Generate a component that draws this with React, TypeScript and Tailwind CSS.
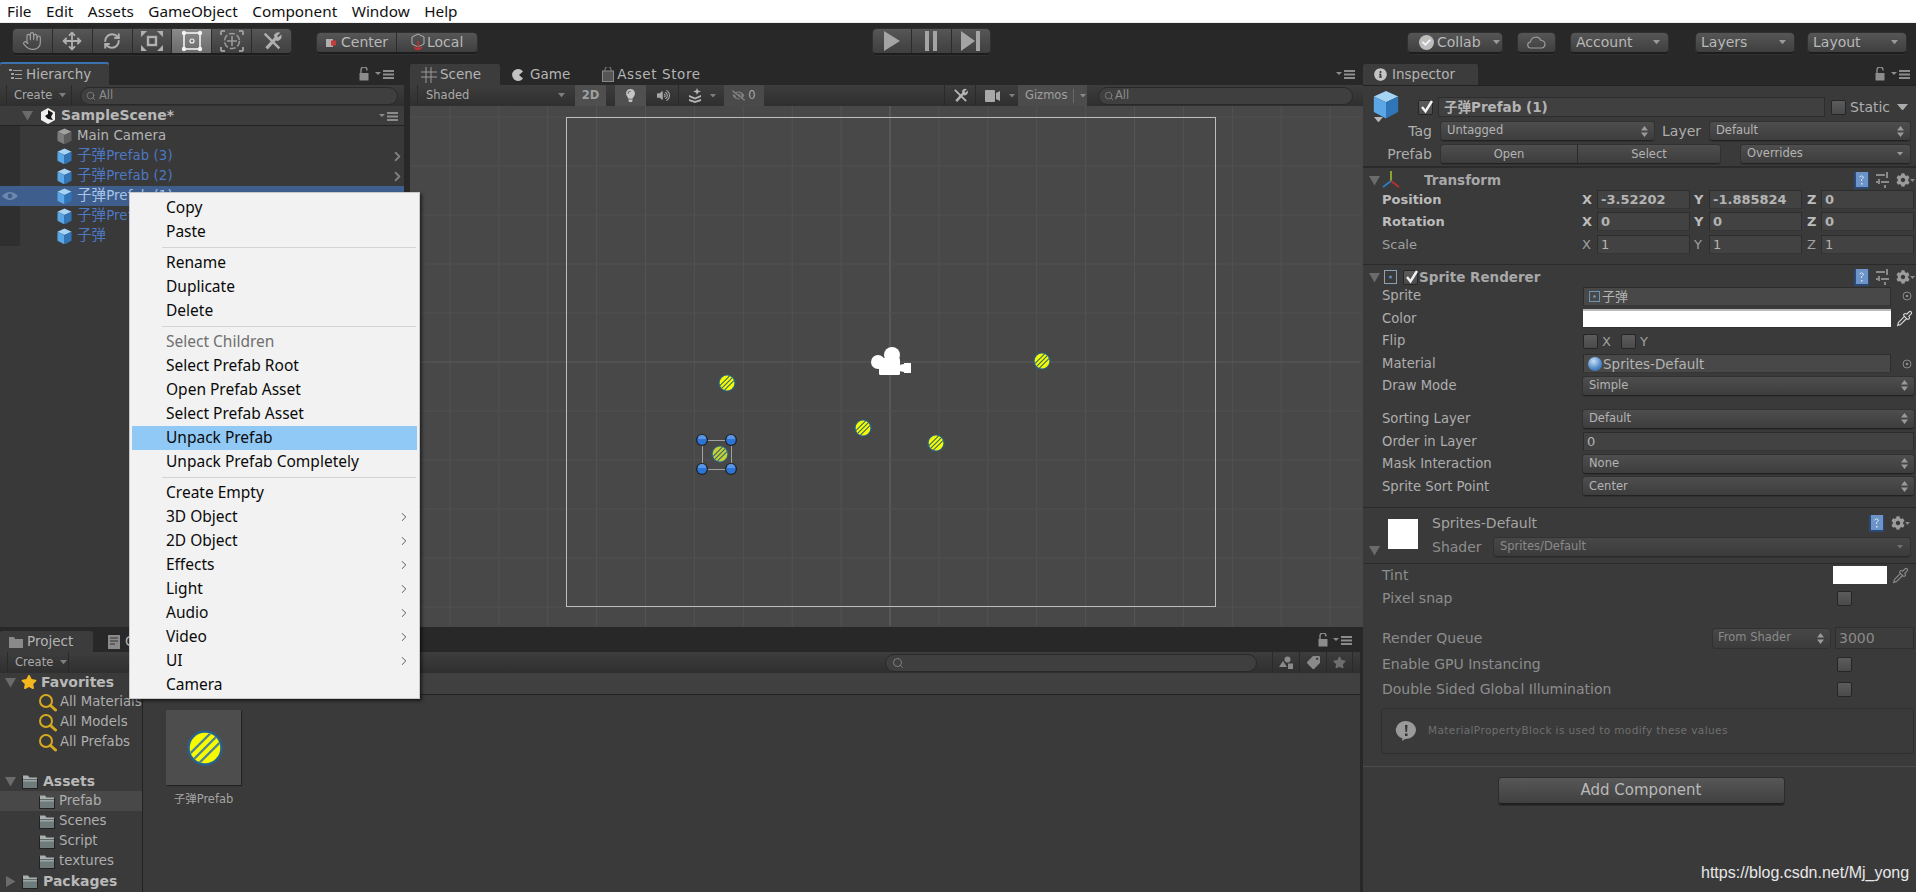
import React, { useId } from "react";
import { Hand, Move, RefreshCw, Pipette, Search, ChevronRight } from "lucide-react";
import { FaInfoCircle, FaLightbulb, FaVolumeUp, FaEyeSlash, FaCog, FaStar, FaTag, FaCheck } from "react-icons/fa";

const MenuIcon = () => (
  <svg width="22" height="12" viewBox="0 0 22 12" className="shrink-0">
    <path d="M0 4h6l-3 3z" fill="#8c8c8c" />
    <path d="M8 2h11v2H8zM8 5.5h11v2H8zM8 9h11v2H8z" fill="#8c8c8c" />
  </svg>
);
const Lock = () => (
  <svg width="10" height="14" viewBox="0 0 10 14" className="shrink-0">
    <path d="M2 6V3a3 3 0 0 1 6 0v.5" fill="none" stroke="#8c8c8c" strokeWidth="1.4" />
    <rect x="0.5" y="6" width="9" height="7.5" fill="#8c8c8c" />
  </svg>
);
const Down = ({ c = "#9a9a9a", w = 7 }: { c?: string; w?: number }) => (
  <svg width={w} height={w * 0.6} viewBox="0 0 10 6" className="shrink-0">
    <path d="M0 0h10L5 6z" fill={c} />
  </svg>
);
const Foldout = ({ open = true }: { open?: boolean }) => (
  <svg width="11" height="11" viewBox="0 0 11 11" className="shrink-0">
    {open ? <path d="M0 1h11L5.5 10.5z" fill="#6b6b6b" /> : <path d="M1 0v11L10.5 5.5z" fill="#6b6b6b" />}
  </svg>
);
const UpDown = () => (
  <svg width="7" height="11" viewBox="0 0 7 11" className="shrink-0">
    <path d="M3.5 0 7 4.5H0zM3.5 11 0 6.5h7z" fill="#9a9a9a" />
  </svg>
);
const Cube = ({ gray = false, size = 15 }: { gray?: boolean; size?: number }) => (
  <svg width={size} height={size * 1.13} viewBox="0 0 16 18" className="shrink-0">
    <path d="M8 .5 15.5 4 8 7.5.5 4z" fill={gray ? "#a0a0a0" : "#a6d4f5"} />
    <path d="M.5 4 8 7.5V17.5L.5 13.5z" fill={gray ? "#7c7c7c" : "#5aa6e6"} />
    <path d="M15.5 4 8 7.5V17.5l7.5-4z" fill={gray ? "#5c5c5c" : "#2f75b8"} />
  </svg>
);
const Folder = () => (
  <svg width="18" height="17" viewBox="0 0 18 17" className="shrink-0">
    <path d="M1 3.5h6l1.5 2H17V16H1z" fill="#222" />
    <path d="M2 2.5h5l1.5 2H16v2H2z" fill="#a8b0b0" />
    <path d="M2 7h14v8H2z" fill="#6f7b7b" />
    <path d="M2 7h14v1.5H2z" fill="#9aa4a4" />
  </svg>
);
const Lens = () => (
  <svg width="19" height="19" viewBox="0 0 19 19" className="shrink-0">
    <circle cx="8" cy="8" r="6" fill="none" stroke="#d6aa1e" strokeWidth="2" />
    <path d="M12.5 12.5 17.5 17" stroke="#d6aa1e" strokeWidth="3" strokeLinecap="round" />
  </svg>
);
const Sprite = ({ x, y, r = 8, faded = false, stripe = "#2f6a78" }: { x: number; y: number; r?: number; faded?: boolean; stripe?: string }) => {
  const id = useId();
  return (
    <g transform={`translate(${x} ${y}) scale(${r / 8})`}>
      <clipPath id={id}>
        <circle r="7.4" />
      </clipPath>
      <circle r="8.6" fill="#28628a" />
      <circle r="7.4" fill={faded ? "#c9cf30" : "#f8fa00"} />
      <g clipPath={`url(#${id})`} stroke={stripe} strokeWidth="1.1">
        <path d="M-9 4.5 4.5-9M-8 8 8-8M-4.500 9 9-4.500" />
      </g>
    </g>
  );
};
const StripeThumb = () => (
  <svg width="36" height="36" viewBox="-18 -18 36 36">
    <Sprite x={0} y={0} r={16.5} stripe="#4a8296" />
  </svg>
);
const Tools = ({ c = "#a8a8a8", s = 22 }: { c?: string; s?: number }) => (
  <svg width={s} height={s} viewBox="0 0 24 24" fill="none" stroke={c} strokeWidth="3.4">
    <path d="M6 20 17 8" />
    <path d="M4 4l16 16" strokeWidth="2.6" />
    <path d="M14 6a5 5 0 0 1 7-3l-3.5 3.5 1.5 1.5L22 5a5 5 0 0 1-5 7z" fill={c} stroke="none" />
  </svg>
);
const Seg = ({ active, children }: { active?: boolean; children: React.ReactNode }) => (
  <div
    className={`flex-1 flex items-center justify-center border-r border-[#2c2c2c] last:border-r-0 ${
      active ? "bg-linear-to-b from-[#8b8b8b] to-[#6a6a6a]" : ""
    }`}
  >
    {children}
  </div>
);
const groupCls =
  "flex rounded-[4px] bg-linear-to-b from-[#565656] to-[#3f3f3f] border-b-2 border-[#1d1d1d] shadow-[0_0_0_1px_#303030]";

const TopBtn = ({ className, children }: { className: string; children: React.ReactNode }) => (
  <div className={`${groupCls} h-[21px] items-center text-[14px] text-[#b8b8b8] ${className}`}>{children}</div>
);

const Toolbar = () => (
  <div className="h-[41px] shrink-0 bg-[#282828] border-t border-[#eeeeee] flex items-start pl-[13px] pt-[6px]">
    <div className={`${groupCls} w-[278px] h-[26px]`}>
      <Seg><Hand size={20} color="#a0a0a0" strokeWidth={1.4} /></Seg>
      <Seg><Move size={20} color="#b0b0b0" strokeWidth={2.2} /></Seg>
      <Seg><RefreshCw size={18} color="#b0b0b0" strokeWidth={2.6} /></Seg>
      <Seg>
        <svg width="24" height="22" viewBox="0 0 24 22" fill="none" stroke="#b0b0b0" strokeWidth="2">
          <rect x="8" y="7" width="8" height="8" strokeWidth="2.4" />
          <path d="M1 1h6L1 7zM23 1h-6l6 6zM1 21h6l-6-6zM23 21h-6l6-6z" fill="#b0b0b0" stroke="none" />
        </svg>
      </Seg>
      <Seg active>
        <svg width="22" height="22" viewBox="0 0 22 22" fill="none" stroke="#f2f2f2" strokeWidth="1.6">
          <rect x="3" y="3" width="16" height="16" />
          <circle cx="11" cy="11" r="2" strokeWidth="1.2" />
          <g fill="#f2f2f2" stroke="none">
            <circle cx="3" cy="3" r="2.2" /><circle cx="19" cy="3" r="2.2" /><circle cx="3" cy="19" r="2.2" /><circle cx="19" cy="19" r="2.2" />
          </g>
        </svg>
      </Seg>
      <Seg>
        <svg width="24" height="22" viewBox="0 0 24 22" fill="none" stroke="#9a9a9a" strokeWidth="1.6">
          <circle cx="12" cy="11" r="7.5" strokeDasharray="6 2" />
          <path d="M12 6v10M7 11h10" />
          <path d="M1 1h4M1 1v4M23 1h-4M23 1v4M1 21h4M1 21v-4M23 21h-4M23 21v-4" strokeWidth="2" />
        </svg>
      </Seg>
      <Seg><Tools c="#b0b0b0" /></Seg>
    </div>
    <div className={`${groupCls} ml-[26px] mt-[4px] w-[160px] h-[21px] text-[14px] text-[#b8b8b8]`}>
      <div className="w-[80px] flex items-center pl-[9px] gap-[3px] border-r border-[#2c2c2c]">
        <svg width="12" height="10" viewBox="0 0 12 10"><rect width="7" height="8" y="1" fill="#b0b0b0" /><rect x="5" y="2.5" width="5" height="5" fill="#c73a3a" /></svg>
        Center
      </div>
      <div className="flex-1 flex items-center pl-[14px] gap-[2px]">
        <svg width="14" height="19" viewBox="0 0 14 19" fill="none"><path d="M7 1l6 3v7l-6 3-6-3V4z" stroke="#b0b0b0" /><path d="M7 8v9M3 14q4 5 8 0" stroke="#c43030" strokeWidth="1.6" /></svg>
        Local
      </div>
    </div>
    <div className={`${groupCls} ml-[396px] w-[117px] h-[26px]`}>
      <Seg><svg width="18" height="20" viewBox="0 0 18 20"><path d="M1 0 17 10 1 20z" fill="#a4a4a4" /></svg></Seg>
      <Seg><svg width="12" height="20" viewBox="0 0 12 20"><path d="M0 0h4v20H0zM8 0h4v20H8z" fill="#a4a4a4" /></svg></Seg>
      <Seg><svg width="20" height="20" viewBox="0 0 20 20"><path d="M0 0 14 10 0 20zM15 0h4v20h-4z" fill="#a4a4a4" /></svg></Seg>
    </div>
    <TopBtn className="ml-[418px] mt-[4px] w-[94px] pl-[11px] gap-[3px]">
      <span className="w-[15px] h-[15px] rounded-full bg-[#bcbcbc] flex items-center justify-center"><FaCheck size={9} color="#f4f4f4" /></span>
      Collab
      <span className="ml-[9px]"><Down /></span>
    </TopBtn>
    <TopBtn className="ml-[16px] mt-[4px] w-[37px] justify-center">
      <svg width="19" height="13" viewBox="0 0 19 13" fill="none" stroke="#9c9c9c" strokeWidth="1.2"><path d="M4 12a3 3 0 0 1-.5-6A5.5 5.5 0 0 1 14 4.5 3.8 3.8 0 0 1 15 12z" /></svg>
    </TopBtn>
    <TopBtn className="ml-[16px] mt-[4px] w-[97px] pl-[5px] justify-between pr-[8px]">Account<Down /></TopBtn>
    <TopBtn className="ml-[28px] mt-[4px] w-[98px] pl-[5px] justify-between pr-[8px]">Layers<Down /></TopBtn>
    <TopBtn className="ml-[14px] mt-[4px] w-[98px] pl-[5px] justify-between pr-[8px]">Layout<Down /></TopBtn>
  </div>
);

const Tab = ({ className = "", active, blue, children }: { className?: string; active?: boolean; blue?: boolean; children: React.ReactNode }) => (
  <div
    className={`h-[21px] flex items-center text-[13.5px] text-[#b4b4b4] rounded-t-[2px] ${active ? "bg-[#3c3c3c]" : ""} ${
      blue ? "shadow-[0_-2px_0_0_#3a72b0]" : ""
    } ${className}`}
  >
    {children}
  </div>
);
const barCls = "h-[21px] shrink-0 bg-linear-to-b from-[#3d3d3d] to-[#2f2f2f] flex items-center";

const Row = ({ name, blue, sel, gray, chev }: { name: string; blue?: boolean; sel?: boolean; gray?: boolean; chev?: boolean }) => (
  <div className={`h-[20px] flex items-center ${sel ? "bg-[#3e5f8e]" : ""}`}>
    <div className={`w-[20px] h-full flex items-center justify-center ${sel ? "" : "bg-[#2f2f2f]"}`}>
      {sel && (
        <svg width="16" height="10" viewBox="0 0 16 10">
          <path d="M0 5q8-8 16 0-8 8-16 0z" fill="#6d88ad" />
          <circle cx="8" cy="5" r="2.4" fill="#3e5f8e" />
        </svg>
      )}
    </div>
    <div className="ml-[37px]"><Cube gray={gray} /></div>
    <span className={`ml-[5px] text-[13.3px] tracking-[0.1px] ${blue ? (sel ? "text-[#a9c4ea]" : "text-[#4d78c4]") : "text-[#b4b4b4]"}`}>
      {blue ? <><span className="text-[14.5px]">子弹</span>{name}</> : name}
    </span>
    {chev && <ChevronRight size={15} strokeWidth={3} color="#7f7f7f" className="ml-auto mr-[-1px]" />}
  </div>
);

const Hierarchy = () => (
  <div className="w-[404px] shrink-0 flex flex-col bg-[#393939]">
    <div className="h-[22px] shrink-0 bg-[#282828] flex items-end pr-[7px]">
      <Tab active blue className="w-[109px] pl-[9px] gap-[4px]">
        <svg width="13" height="11" viewBox="0 0 13 11"><path d="M0 0h3v2H0zM4 1h9v1H4zM2 4h3v2H2zM6 5h7v1H6zM2 8h3v2H2zM6 9h7v1H6z" fill="#a0a0a0" /></svg>
        Hierarchy
      </Tab>
      <div className="ml-auto self-center flex items-center gap-[6px]"><Lock /><MenuIcon /></div>
    </div>
    <div className={barCls}>
      <div className="w-[66px] ml-[6px] h-full border-x border-[#2a2a2a] flex items-center pl-[7px] gap-[7px] text-[11.5px] text-[#aaaaaa]">Create<Down c="#7e7e7e" /></div>
      <div className="ml-[8px] w-[318px] h-[18px] rounded-full bg-[#3f3f3f] border border-[#292929] flex items-center pl-[5px] gap-[3px] text-[11.5px] text-[#8b8b8b]">
        <Search size={10} color="#808080" />All
      </div>
    </div>
    <div className="h-[20px] shrink-0 bg-[#3c3c3c] border-b border-[#222] flex items-center pl-[22px] pr-[3px]">
      <Foldout />
      <svg width="18" height="18" viewBox="0 0 18 18" className="ml-[6px]">
        <path d="M9 1l7 4v8l-7 4-7-4V5z" fill="#f0f0f0" />
        <path d="M9 3l5 3-2 4 2 3-5-1-3-3 3-2z" fill="#151515" />
      </svg>
      <span className="ml-[4px] text-[14px] font-bold text-[#b8b8b8]">SampleScene*</span>
      <div className="ml-auto"><MenuIcon /></div>
    </div>
    <div className="flex-1">
      <Row name="Main Camera" gray />
      <Row name="Prefab (3)" blue chev />
      <Row name="Prefab (2)" blue chev />
      <Row name="Prefab (1)" blue sel chev />
      <Row name="Prefab" blue chev />
      <Row name="" blue />
    </div>
  </div>
);

const gridX = Array.from({ length: 20 }, (_, i) => 480 + (i - 9) * 48.9);
const gridY = Array.from({ length: 11 }, (_, i) => 11 + i * 49);

const SceneCanvas = () => (
  <div className="flex-1 bg-[#484848] overflow-hidden">
    <svg width="951" height="520" viewBox="0 0 951 520" className="block">
      {gridX.map((x) => (
        <line key={x} x1={x} x2={x} y1={0} y2={520} stroke={x === 480 ? "#666666" : "#535353"} />
      ))}
      {gridY.map((y) => (
        <line key={y} x1={0} x2={951} y1={y} y2={y} stroke={y === 256 ? "#5a5a5a" : "#505050"} />
      ))}
      <rect x="156.5" y="11.5" width="649" height="489" fill="none" stroke="#bdbdbd" />
      <g fill="#fff">
        <circle cx="468" cy="256" r="7" />
        <circle cx="482" cy="249" r="8" />
        <rect x="469" y="252" width="21" height="17" rx="1.5" />
        <path d="M489 259l5-1v-1h7v10h-7v-1l-5-1z" />
      </g>
      <Sprite x={317} y={277} />
      <Sprite x={453} y={322} />
      <Sprite x={526} y={337} />
      <Sprite x={632} y={255} />
      <Sprite x={310} y={348} faded />
      <rect x="292.5" y="334.5" width="29" height="29" fill="none" stroke="#a0a0a0" />
      {[[292, 334], [321, 334], [292, 363], [321, 363]].map(([x, y]) => (
        <g key={`${x}-${y}`}>
          <circle cx={x} cy={y} r="6" fill="#222" />
          <circle cx={x} cy={y} r="4.8" fill="#2d74d8" />
          <path d={`M${x - 4} ${y - 1}a4 4 0 0 1 8 0z`} fill="#5a96e4" />
        </g>
      ))}
    </svg>
  </div>
);

const Scene = () => (
  <div className="flex-1 flex flex-col ml-[6px] min-w-0">
    <div className="h-[22px] shrink-0 bg-[#282828] flex items-end pr-[5px]">
      <Tab active className="w-[90px] pl-[11px] gap-[3px]">
        <svg width="16" height="16" viewBox="0 0 16 16" stroke="#9a9a9a"><path d="M0 5h16M0 10h16M5 0v16M10 0v16" /></svg>
        Scene
      </Tab>
      <Tab className="ml-[12px] gap-[6px]">
        <svg width="12" height="12" viewBox="0 0 12 12"><path d="M11 2.5A6 6 0 1 0 11 9.5L7 6z" fill="#c2c2c2" /></svg>
        Game
      </Tab>
      <Tab className="ml-[32px] gap-[3px] tracking-[0.6px]">
        <svg width="12" height="15" viewBox="0 0 12 15" fill="none" stroke="#8a8a8a"><path d="M3 4V2.5a3 3 0 0 1 6 0V4" /><rect x=".5" y="4" width="11" height="10.5" fill="#555" /></svg>
        Asset Store
      </Tab>
      <div className="ml-auto self-center"><MenuIcon /></div>
    </div>
    <div className={`${barCls} text-[11.5px] text-[#aaaaaa]`}>
      <div className="ml-[7px] w-[153px] h-full flex items-center pl-[8px] pr-[5px] justify-between border-l border-[#2a2a2a]">Shaded<Down c="#7e7e7e" /></div>
      <div className="ml-[5px] w-[31px] h-full bg-[#4f4f4f] flex items-center justify-center font-bold text-[#a0a0a0]">2D</div>
      <div className="ml-[9px] w-[31px] h-full bg-[#505050] flex items-center justify-center"><FaLightbulb size={13} color="#c4c4c4" /></div>
      <div className="ml-[2px] w-[31px] h-full flex items-center justify-center border-r border-[#2a2a2a]"><FaVolumeUp size={13} color="#a8a8a8" /></div>
      <div className="w-[45px] h-full flex items-center pl-[9px] gap-[7px]">
        <svg width="15" height="15" viewBox="0 0 15 15"><path d="M9 0l1 2.5 3 1-3 1-1 2.500-1-2.500-3-1 3-1zM1 7l6 2.500L13 7v2l-6 2.500L1 9zM1 11l6 2 6-2v2l-6 2-6-2z" fill="#b4b4b4" /></svg>
        <Down c="#7e7e7e" w={6} />
      </div>
      <div className="w-[40px] h-full bg-[#4a4a4a] flex items-center justify-center gap-[3px] text-[#a8a8a8]"><FaEyeSlash size={13} color="#7f7f7f" />0</div>
      <div className="ml-[180px] w-[32px] h-full flex items-center justify-center border-x border-[#2a2a2a]"><Tools s={17} c="#b4b4b4" /></div>
      <div className="w-[42px] h-full flex items-center pl-[9px] gap-[8px]">
        <svg width="16" height="12" viewBox="0 0 16 12"><rect width="10" height="12" rx="1" fill="#a8a8a8" /><path d="M11 3l4-2v10l-4-2z" fill="#a8a8a8" /></svg>
        <Down c="#7e7e7e" w={6} />
      </div>
      <div className="w-[69px] h-full bg-[#4c4c4c] flex items-center pl-[7px] gap-[6px] text-[#a0a0a0] whitespace-nowrap">Gizmos<span className="w-px h-[14px] bg-[#6a6a6a]" /><Down c="#8a8a8a" w={6} /></div>
      <div className="ml-[11px] w-[255px] h-[18px] rounded-full bg-[#3f3f3f] border border-[#292929] flex items-center pl-[5px] gap-[1px] text-[#8b8b8b]">
        <Search size={10} color="#808080" />All
      </div>
    </div>
    <SceneCanvas />
  </div>
);

const Tree = ({ icon, name, pl, sel }: { icon: React.ReactNode; name: string; pl: number; sel?: boolean }) => (
  <div className={`h-[20px] flex items-center ${sel ? "bg-[#484848]" : ""}`} style={{ paddingLeft: pl }}>
    {icon}
    <span className="ml-[3px] whitespace-nowrap text-[13.3px] text-[#aeaeae]">{name}</span>
  </div>
);

const Project = () => (
  <div className="h-[265px] shrink-0 flex flex-col mr-[3px]">
    <div className="h-[25px] shrink-0 bg-[#282828] flex items-end pr-[5px]">
      <Tab active className="w-[93px] pl-[9px] gap-[4px]">
        <svg width="14" height="12" viewBox="0 0 14 12"><path d="M0 1h5l1 2h8v9H0z" fill="#8a8a8a" /></svg>
        Project
      </Tab>
      <Tab className="ml-[15px] gap-[5px]">
        <svg width="12" height="14" viewBox="0 0 12 14"><rect width="12" height="14" fill="#8a8a8a" /><path d="M2 3h8M2 6h8M2 9h5" stroke="#333" /></svg>
        Console
      </Tab>
      <div className="ml-auto self-center flex items-center gap-[5px]"><Lock /><MenuIcon /></div>
    </div>
    <div className={barCls}>
      <div className="ml-[7px] w-[62px] h-full border-x border-[#2a2a2a] flex items-center pl-[7px] gap-[7px] text-[11.5px] text-[#aaaaaa]">Create<Down c="#7e7e7e" /></div>
      <div className="ml-[816px] w-[372px] h-[18px] rounded-full bg-[#3f3f3f] border border-[#292929] flex items-center pl-[6px]"><Search size={12} color="#808080" /></div>
      <div className="ml-[15px] w-[27px] h-full border-l border-[#2a2a2a] flex items-center justify-center">
        <svg width="14" height="13" viewBox="0 0 14 13" fill="#8a8a8a"><circle cx="8.500" cy="3.500" r="3" /><path d="M4 5l4 6H0z" /><rect x="9" y="7.500" width="5" height="5.500" /></svg>
      </div>
      <div className="w-[27px] h-full border-l border-[#2a2a2a] flex items-center justify-center"><FaTag size={13} color="#8a8a8a" className="rotate-90" /></div>
      <div className="w-[27px] h-full border-x border-[#2a2a2a] flex items-center justify-center"><FaStar size={13} color="#6e6e6e" /></div>
    </div>
    <div className="flex-1 flex bg-[#3a3a3a] min-h-0">
      <div className="w-[143px] shrink-0 border-r border-[#222] overflow-hidden">
        <div className="h-[20px] flex items-center pl-[5px] mt-[-1px]">
          <Foldout /><FaStar size={16} color="#f5b81e" className="ml-[5px]" />
          <span className="ml-[4px] font-bold text-[14px] text-[#b8b8b8]">Favorites</span>
        </div>
        <Tree pl={38} icon={<Lens />} name="All Materials" />
        <Tree pl={38} icon={<Lens />} name="All Models" />
        <Tree pl={38} icon={<Lens />} name="All Prefabs" />
        <div className="h-[19px]" />
        <div className="h-[20px] flex items-center pl-[5px]">
          <Foldout /><span className="ml-[5px]"><Folder /></span>
          <span className="ml-[4px] font-bold text-[14px] text-[#b8b8b8]">Assets</span>
        </div>
        <Tree pl={38} sel icon={<Folder />} name="Prefab" />
        <Tree pl={38} icon={<Folder />} name="Scenes" />
        <Tree pl={38} icon={<Folder />} name="Script" />
        <Tree pl={38} icon={<Folder />} name="textures" />
        <div className="h-[20px] flex items-center pl-[5px]">
          <Foldout open={false} /><span className="ml-[5px]"><Folder /></span>
          <span className="ml-[4px] font-bold text-[14px] text-[#b8b8b8]">Packages</span>
        </div>
      </div>
      <div className="flex-1 flex flex-col min-w-0">
        <div className="h-[22px] shrink-0 bg-[#404040] border-b border-[#222]" />
        <div className="ml-[23px] mt-[15px] w-[75px] flex flex-col items-center">
          <div className="w-[75px] h-[75px] bg-[#4d4d4d] shadow-[1px_1px_1px_#222] flex items-center justify-center pl-[3px]"><StripeThumb /></div>
          <span className="mt-[6px] text-[11.5px] text-[#a4a4a4] whitespace-nowrap">子弹Prefab</span>
        </div>
      </div>
    </div>
  </div>
);

const Item = ({ t, dim, hi, sub }: { t: string; dim?: boolean; hi?: boolean; sub?: boolean }) => (
  <div className={`h-[24px] flex items-center pl-[34px] pr-[8px] ${hi ? "bg-[#90c8f6]" : ""} ${dim ? "text-[#6f6f6f]" : "text-[#0a0a0a]"}`}>
    {t}
    {sub && <ChevronRight size={14} strokeWidth={1.5} color="#444" className="ml-auto mr-[-2px]" />}
  </div>
);
const Sep = () => <div className="h-[7px] flex items-center pl-[30px] pr-[1px]"><div className="w-full h-px bg-[#d4d4d4]" /></div>;

const ContextMenu = () => (
  <div className="absolute left-[129px] top-[192px] w-[291px] pt-[3px] pb-px pl-[2px] pr-[2px] bg-[#f2f2f2] border border-[#c8c8c8] shadow-[2px_2px_3px_rgba(0,0,0,0.55)] text-[15.5px] font-[family-name:'Noto_Sans',sans-serif]">
    <Item t="Copy" /><Item t="Paste" /><Sep />
    <Item t="Rename" /><Item t="Duplicate" /><Item t="Delete" /><Sep />
    <Item t="Select Children" dim /><Item t="Select Prefab Root" /><Item t="Open Prefab Asset" /><Item t="Select Prefab Asset" />
    <Item t="Unpack Prefab" hi /><Item t="Unpack Prefab Completely" /><Sep />
    <Item t="Create Empty" /><Item t="3D Object" sub /><Item t="2D Object" sub /><Item t="Effects" sub /><Item t="Light" sub />
    <Item t="Audio" sub /><Item t="Video" sub /><Item t="UI" sub /><Item t="Camera" />
  </div>
);

const inspectorLabel = "text-[13.2px] text-[#aeaeae] whitespace-nowrap";
const dimLabel = "text-[14px] text-[#8d8d8d] whitespace-nowrap";
const Drop = ({ t, className = "" }: { t: string; className?: string }) => (
  <div className={`h-[19px] rounded-[3px] bg-linear-to-b from-[#4e4e4e] to-[#3d3d3d] border-b border-[#222] shadow-[0_0_0_1px_#313131] flex items-center pl-[6px] pr-[6px] justify-between text-[11.5px] text-[#b4b4b4] whitespace-nowrap ${className}`}>
    {t}<UpDown />
  </div>
);
const Field = ({ t, className = "", bold }: { t: React.ReactNode; className?: string; bold?: boolean }) => (
  <div className={`h-[19px] bg-[#424242] border border-[#2d2d2d] border-b-[#363636] flex items-center pl-[3px] text-[13px] text-[#b4b4b4] whitespace-nowrap ${bold ? "font-bold" : ""} ${className}`}>{t}</div>
);
const Check = ({ on, className = "" }: { on?: boolean; className?: string }) => (
  <div className={`relative w-[15px] h-[15px] shrink-0 rounded-[2px] bg-linear-to-b from-[#5c5c5c] to-[#4a4a4a] border border-[#262626] ${className}`}>
    {on && (
      <svg width="14" height="15" viewBox="0 0 14 15" className="absolute left-[1px] top-[-2px]">
        <path d="M2 8l3.500 4.500L12 2" fill="none" stroke="#f2f2f2" strokeWidth="2.4" />
      </svg>
    )}
  </div>
);
const Book = () => (
  <svg width="16" height="18" viewBox="0 0 16 18" className="shrink-0">
    <rect x="1" y="1" width="15" height="17" fill="#2a4a75" />
    <rect x="3" y="1" width="12" height="15" fill="#6d94c8" />
    <path d="M6.500 6q2-2.500 4 0-.5 1.500-2 2.500v1.500" stroke="#d7e4f5" fill="none" />
    <rect x="8" y="12" width="1.500" height="1.500" fill="#d7e4f5" />
  </svg>
);
const Sliders = () => (
  <svg width="13" height="16" viewBox="0 0 13 16" fill="#8a8a8a" className="shrink-0">
    <path d="M0 2h9v2H0zM10 0h2v6h-2zM0 9h2v-2h2v5H2v-1H0zM5 9h8v2H5zM8 13h2v3H8z" />
  </svg>
);
const Gear = () => (
  <span className="flex items-center shrink-0"><FaCog size={14} color="#9c9c9c" /><Down c="#8a8a8a" w={5} /></span>
);
const Dot = () => (
  <svg width="10" height="10" viewBox="0 0 10 10" fill="none" stroke="#8a8a8a" className="shrink-0">
    <circle cx="5" cy="5" r="4" /><circle cx="5" cy="5" r="1.300" fill="#8a8a8a" stroke="none" />
  </svg>
);
const PropRow = ({ label, children }: { label: string; children?: React.ReactNode }) => (
  <div className="h-[22.5px] flex items-center pl-[19px] pr-[2px]">
    <span className={`w-[201px] shrink-0 ${inspectorLabel}`}>{label}</span>
    {children}
  </div>
);
const Vec = ({ label, bold, x, y, z }: { label: string; bold?: boolean; x: string; y: string; z: string }) => (
  <div className={`h-[22.5px] flex items-center pl-[19px] pr-[2px] text-[13px] ${bold ? "font-bold text-[#bcbcbc]" : "text-[#a0a0a0]"}`}>
    <span className="w-[200px] shrink-0">{label}</span>
    <span className="w-[15px] shrink-0">X</span><Field t={x} bold={bold} className="w-[93px]" />
    <span className="w-[19px] shrink-0 pl-[4px]">Y</span><Field t={y} bold={bold} className="w-[93px]" />
    <span className="w-[19px] shrink-0 pl-[5px]">Z</span><Field t={z} bold={bold} className="flex-1" />
  </div>
);
const Head = ({ icon, t, pl, check }: { icon: React.ReactNode; t: string; pl: number; check?: boolean }) => (
  <div className="h-[20px] pt-[4px] flex items-center pl-[6px] pr-px">
    <Foldout />
    <span className="ml-[2px] w-[18px] flex justify-center">{icon}</span>
    {check && <Check on className="ml-[3px]" />}
    <span className="font-bold text-[13.5px] text-[#a8a8a8] whitespace-nowrap" style={{ marginLeft: pl }}>{t}</span>
    <div className="ml-auto flex items-center gap-[7px]"><Book /><Sliders /><Gear /></div>
  </div>
);

const Inspector = () => (
  <div className="flex-1 flex flex-col min-w-0">
    <div className="h-[22px] shrink-0 bg-[#282828] flex items-end pr-[3px]">
      <Tab active className="w-[115px] pl-[11px] gap-[5px]"><FaInfoCircle size={13} color="#c4c4c4" />Inspector</Tab>
      <div className="ml-auto self-center flex items-center gap-[6px]"><Lock /><MenuIcon /></div>
    </div>
    <div className="flex-1 bg-[#3a3a3a] border-t border-[#222] overflow-hidden pt-px">
      <div className="h-[81px] border-b-2 border-[#2a2a2a] pr-[6px]">
        <div className="flex items-center pt-[10px] h-[30px]">
          <div className="ml-[14px] w-[28px]" />
          <Check on className="ml-[13px]" />
          <div className="ml-[5px] w-[387px] h-[20px] bg-[#404040] border border-[#2d2d2d] flex items-center pl-[5px] text-[13.5px] font-bold text-[#b4b4b4]">子弹Prefab (1)</div>
          <Check className="ml-[6px]" />
          <span className="ml-[4px] text-[14px] text-[#aeaeae]">Static</span>
          <span className="ml-[7px]"><Down c="#aaaaaa" w={11} /></span>
        </div>
        <div className="relative flex items-center h-[19px] mt-[5px]">
          <div className="absolute left-[10px] top-[-32px]">
            <Cube size={26} />
            <div className="absolute left-[1px] bottom-[-3px]"><Down c="#b8b8b8" w={9} /></div>
          </div>
          <span className="w-[69px] text-right text-[14px] text-[#aeaeae]">Tag</span>
          <Drop t="Untagged" className="ml-[9px] w-[213px]" />
          <span className="ml-[8px] w-[48px] text-[14px] text-[#aeaeae]">Layer</span>
          <Drop t="Default" className="w-[200px]" />
        </div>
        <div className="flex items-center h-[19px] mt-[4px]">
          <span className="w-[69px] text-right text-[14px] text-[#aeaeae]">Prefab</span>
          <div className="ml-[9px] w-[279px] h-[19px] rounded-[3px] bg-linear-to-b from-[#4e4e4e] to-[#3d3d3d] border-b border-[#222] shadow-[0_0_0_1px_#313131] flex text-[11.5px] text-[#b4b4b4]">
            <span className="w-[137px] flex items-center justify-center border-r border-[#2a2a2a] pt-[2px]">Open</span>
            <span className="flex-1 flex items-center justify-center pt-[2px]">Select</span>
          </div>
          <div className="ml-[21px] w-[169px] h-[19px] rounded-[3px] bg-linear-to-b from-[#4e4e4e] to-[#3d3d3d] border-b border-[#222] shadow-[0_0_0_1px_#313131] flex items-center justify-between pl-[6px] pr-[7px] text-[11.5px] text-[#b4b4b4]">Overrides<Down w={6} /></div>
        </div>
      </div>
      <div className="h-[97px] border-b border-[#2a2a2a]">
        <Head
          t="Transform"
          pl={24}
          icon={
            <svg width="18" height="18" viewBox="0 0 18 18" fill="none" strokeWidth="1.600">
              <path d="M9 10V0" stroke="#9ac02e" /><path d="M9 10 1 16" stroke="#2d7fd0" /><path d="M9 10l8 6" stroke="#c03030" />
            </svg>
          }
        />
        <Vec label="Position" bold x="-3.52202" y="-1.885824" z="0" />
        <Vec label="Rotation" bold x="0" y="0" z="0" />
        <Vec label="Scale" x="1" y="1" z="1" />
      </div>
      <div className="h-[243px] border-b border-[#2a2a2a]">
        <Head
          t="Sprite Renderer"
          pl={1}
          check
          icon={
            <svg width="16" height="17" viewBox="0 0 16 17" fill="none" stroke="#8fa0b0">
              <rect x="1.500" y="1.500" width="12" height="13" /><circle cx="7.500" cy="8" r="1.500" fill="#5c8ebc" stroke="none" />
            </svg>
          }
        />
        <PropRow label="Sprite">
          <Field className="w-[308px] bg-[#484848]" t={
            <span className="flex items-center gap-[1px] pl-px text-[13px]">
              <svg width="13" height="13" viewBox="0 0 13 13" fill="none" stroke="#6c93b4"><rect x="1.500" y="1.500" width="10" height="10" /><circle cx="6.500" cy="6.500" r="1" fill="#6c93b4" /></svg>子弹
            </span>
          } />
          <span className="ml-[11px]"><Dot /></span>
        </PropRow>
        <PropRow label="Color">
          <div className="w-[308px] h-[19px] bg-white border-t-[2px] border-[#bbbbbb] border-b border-b-[#333]" />
          <Pipette size={17} color="#d8d8d8" strokeWidth={1.6} className="ml-[5px]" />
        </PropRow>
        <PropRow label="Flip">
          <Check /><span className="ml-[4px] text-[13px] text-[#a0a0a0]">X</span>
          <Check className="ml-[10px]" /><span className="ml-[4px] text-[13px] text-[#a0a0a0]">Y</span>
        </PropRow>
        <PropRow label="Material">
          <Field className="w-[308px] bg-[#484848]" t={
            <span className="flex items-center gap-px pl-px text-[13.5px]">
              <span className="w-[14px] h-[14px] rounded-full bg-[radial-gradient(circle_at_40%_30%,#c8e0f8,#4d87c6_60%,#2b5c96)]" />Sprites-Default
            </span>
          } />
          <span className="ml-[11px]"><Dot /></span>
        </PropRow>
        <PropRow label="Draw Mode"><Drop t="Simple" className="flex-1" /></PropRow>
        <div className="h-[10.5px]" />
        <PropRow label="Sorting Layer"><Drop t="Default" className="flex-1" /></PropRow>
        <PropRow label="Order in Layer"><Field t="0" className="flex-1" /></PropRow>
        <PropRow label="Mask Interaction"><Drop t="None" className="flex-1" /></PropRow>
        <PropRow label="Sprite Sort Point"><Drop t="Center" className="flex-1" /></PropRow>
      </div>
      <div className="h-[56px] border-b border-[#2a2a2a] flex pl-[6px] pr-[6px]">
        <div className="self-end mb-[7px]"><Foldout /></div>
        <div className="ml-[8px] mt-[11px] w-[30px] h-[30px] bg-white shrink-0" />
        <div className="ml-[14px] flex-1 min-w-0">
          <div className="mt-[7px] h-[16px] flex items-center text-[14px] text-[#a4a4a4]">
            Sprites-Default
            <div className="ml-auto flex items-center gap-[7px]"><Book /><Gear /></div>
          </div>
          <div className="mt-[6px] flex items-center">
            <span className="w-[62px] text-[14px] text-[#8d8d8d]">Shader</span>
            <div className="flex-1 h-[19px] rounded-[3px] bg-linear-to-b from-[#474747] to-[#3b3b3b] border-b border-[#2a2a2a] shadow-[0_0_0_1px_#313131] flex items-center justify-between pl-[6px] pr-[7px] text-[11.5px] text-[#8a8a8a]">Sprites/Default<Down c="#707070" w={6} /></div>
          </div>
        </div>
      </div>
      <div className="flex items-center h-[22px] pl-[19px]">
        <span className={dimLabel}>Tint</span>
        <div className="ml-auto w-[54px] h-[18px] bg-white" />
        <Pipette size={17} color="#8c8c8c" strokeWidth={1.600} className="ml-[5px] mr-[7px]" />
      </div>
      <div className="flex items-center h-[22px] mt-px pl-[19px]">
        <span className={dimLabel}>Pixel snap</span>
        <Check className="ml-auto mr-[64px]" />
      </div>
      <div className="flex items-center h-[22px] mt-[18px] pl-[19px] pr-[2px]">
        <span className={dimLabel}>Render Queue</span>
        <div className="ml-auto w-[117px] h-[19px] rounded-[3px] bg-linear-to-b from-[#474747] to-[#3b3b3b] shadow-[0_0_0_1px_#313131] flex items-center justify-between pl-[5px] pr-[6px] text-[11.5px] text-[#8a8a8a]">From Shader<UpDown /></div>
        <div className="ml-[5px] w-[79px] h-[22px] bg-[#3d3d3d] border border-[#2f2f2f] flex items-center pl-[3px] text-[14px] text-[#8a8a8a]">3000</div>
      </div>
      <div className="flex items-center h-[22px] mt-[4px] pl-[19px]">
        <span className={dimLabel}>Enable GPU Instancing</span>
        <Check className="ml-auto mr-[64px]" />
      </div>
      <div className="flex items-center h-[22px] mt-[3px] pl-[19px]">
        <span className={dimLabel}>Double Sided Global Illumination</span>
        <Check className="ml-auto mr-[64px]" />
      </div>
      <div className="ml-[18px] mr-[2px] mt-[8px] h-[46px] border border-[#2f2f2f] rounded-[3px] flex items-center pl-[13px] gap-[11px] text-[10.5px] text-[#6f6f6f] tracking-[0.4px]">
        <svg width="22" height="20" viewBox="0 0 22 20"><path d="M11 0a10 9 0 0 1 0 18h-1l-3 2 .5-2.500A10 9 0 0 1 11 0z" fill="#9a9a9a" /><path d="M10 4h2.500l-.5 7h-1.500zM10 12.500h2.500V15H10z" fill="#333" /></svg>
        MaterialPropertyBlock is used to modify these values
      </div>
      <div className="mt-[12px] border-t border-[#4c4c4c] flex justify-center">
        <div className="mt-[11px] ml-[3px] w-[285px] h-[27px] rounded-[3px] bg-linear-to-b from-[#575757] to-[#404040] border-b-2 border-[#202020] shadow-[0_0_0_1px_#2c2c2c] flex items-center justify-center text-[15px] text-[#b8b8b8]">Add Component</div>
      </div>
    </div>
  </div>
);

export default function App() {
  return (
    <div className="relative w-[1916px] h-[892px] overflow-hidden bg-[#282828] font-[family-name:'DejaVu_Sans','Noto_Sans_CJK_SC',sans-serif]">
      <div className="h-[22px] bg-white flex items-center pl-[7px] gap-[14.5px] text-[15.3px] text-[#111] font-[family-name:'Noto_Sans',sans-serif]">
        <span>File</span><span>Edit</span><span>Assets</span><span>GameObject</span><span>Component</span><span>Window</span><span>Help</span>
      </div>
      <Toolbar />
      <div className="h-[829px] flex">
        <div className="w-[1363px] shrink-0 flex flex-col">
          <div className="h-[564px] shrink-0 flex">
            <Hierarchy />
            <Scene />
          </div>
          <Project />
        </div>
        <Inspector />
      </div>
      <ContextMenu />
      <span className="absolute left-[1701px] top-[863px] text-[16px] leading-[20px] text-[#e8e8e8] font-[family-name:'Liberation_Sans',sans-serif]">https://blog.csdn.net/Mj_yong</span>
    </div>
  );
}
